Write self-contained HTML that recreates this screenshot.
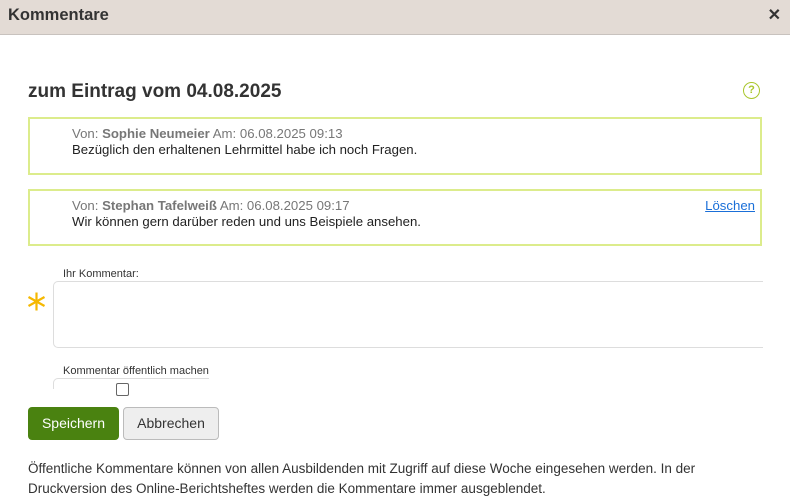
<!DOCTYPE html>
<html><head><meta charset="utf-8"><style>
body{margin:0;width:790px;height:501px;background:#fff;font-family:"Liberation Sans",sans-serif;color:#222;position:relative;overflow:hidden}
.hd{position:absolute;left:0;top:0;width:790px;height:34px;background:#e3dbd5;border-bottom:1px solid #c8c2be}
.hd b{position:absolute;left:8px;top:6px;font-size:16.5px;color:#333}
.x{position:absolute;right:9px;top:5px;font-size:16px;font-weight:bold;color:#333}
h1{position:absolute;left:28px;top:81px;margin:0;font-size:19px;color:#333}
.help{position:absolute;left:743px;top:82px;width:15px;height:15px;border:1.5px solid #a9c62c;border-radius:50%;color:#a9c62c;font-size:11px;font-weight:bold;text-align:center;line-height:15px}
.box{position:absolute;left:28px;width:730px;border:2px solid #dcec8c;font-size:13.2px}
.box .m{position:absolute;left:42px;top:7px;line-height:16px;color:#222}
.g{color:#777}
.box a{position:absolute;right:5px;top:7px;color:#1a6fd8;text-decoration:underline}
.lbl{position:absolute;font-size:11px;color:#333}
.ta{position:absolute;left:53px;top:281px;width:709px;height:65px;border:1px solid #ddd;border-right:none;border-radius:5px 0 0 5px}
.fs{position:absolute;left:53px;top:378px;width:155px;height:10px;border:1px solid #ddd;border-bottom:none;border-right:none;border-radius:5px 0 0 0}
.cb{position:absolute;left:116px;top:383px;width:11px;height:11px;border:1px solid #666;border-radius:2px;background:#fff}
.btn{position:absolute;top:407px;height:31px;border-radius:4px;font-size:14px;text-align:center;line-height:31px}
.p{position:absolute;left:28px;top:459px;font-size:13.5px;line-height:20px;color:#333;width:762px}
</style></head><body>
<div class="hd"><b>Kommentare</b><span class="x">✕</span></div>
<h1>zum Eintrag vom 04.08.2025</h1>
<div class="help">?</div>
<div class="box" style="top:117px;height:54px"><div class="m"><span class="g">Von: <b>Sophie Neumeier</b> Am: 06.08.2025 09:13</span><br>Bezüglich den erhaltenen Lehrmittel habe ich noch Fragen.</div></div>
<div class="box" style="top:189px;height:53px"><div class="m"><span class="g">Von: <b>Stephan Tafelweiß</b> Am: 06.08.2025 09:17</span><br>Wir können gern darüber reden und uns Beispiele ansehen.</div><a>Löschen</a></div>
<div class="lbl" style="left:63px;top:268px">Ihr Kommentar:</div>
<div style="position:absolute;left:60px;top:281px;width:81px;height:1px;background:#ddd"></div>
<div class="ta"></div>
<svg style="position:absolute;left:27px;top:292px" width="19" height="19" viewBox="0 0 19 19"><g stroke="#f5b800" stroke-width="2.2"><line x1="9.5" y1="0.5" x2="9.5" y2="18.5"/><line x1="1.5" y1="5" x2="17.5" y2="14"/><line x1="1.5" y1="14" x2="17.5" y2="5"/></g></svg>
<div class="lbl" style="left:63px;top:365px">Kommentar öffentlich machen</div>
<div class="fs"></div>
<div class="cb"></div>
<div class="btn" style="left:28px;width:91px;background:#4a8210;color:#fff;height:33px;line-height:33px;top:407px">Speichern</div>
<div class="btn" style="left:123px;width:94px;background:#eee;border:1px solid #bbb;color:#333">Abbrechen</div>
<div class="p">Öffentliche Kommentare können von allen Ausbildenden mit Zugriff auf diese Woche eingesehen werden. In der<br>Druckversion des Online-Berichtsheftes werden die Kommentare immer ausgeblendet.</div>
</body></html>
